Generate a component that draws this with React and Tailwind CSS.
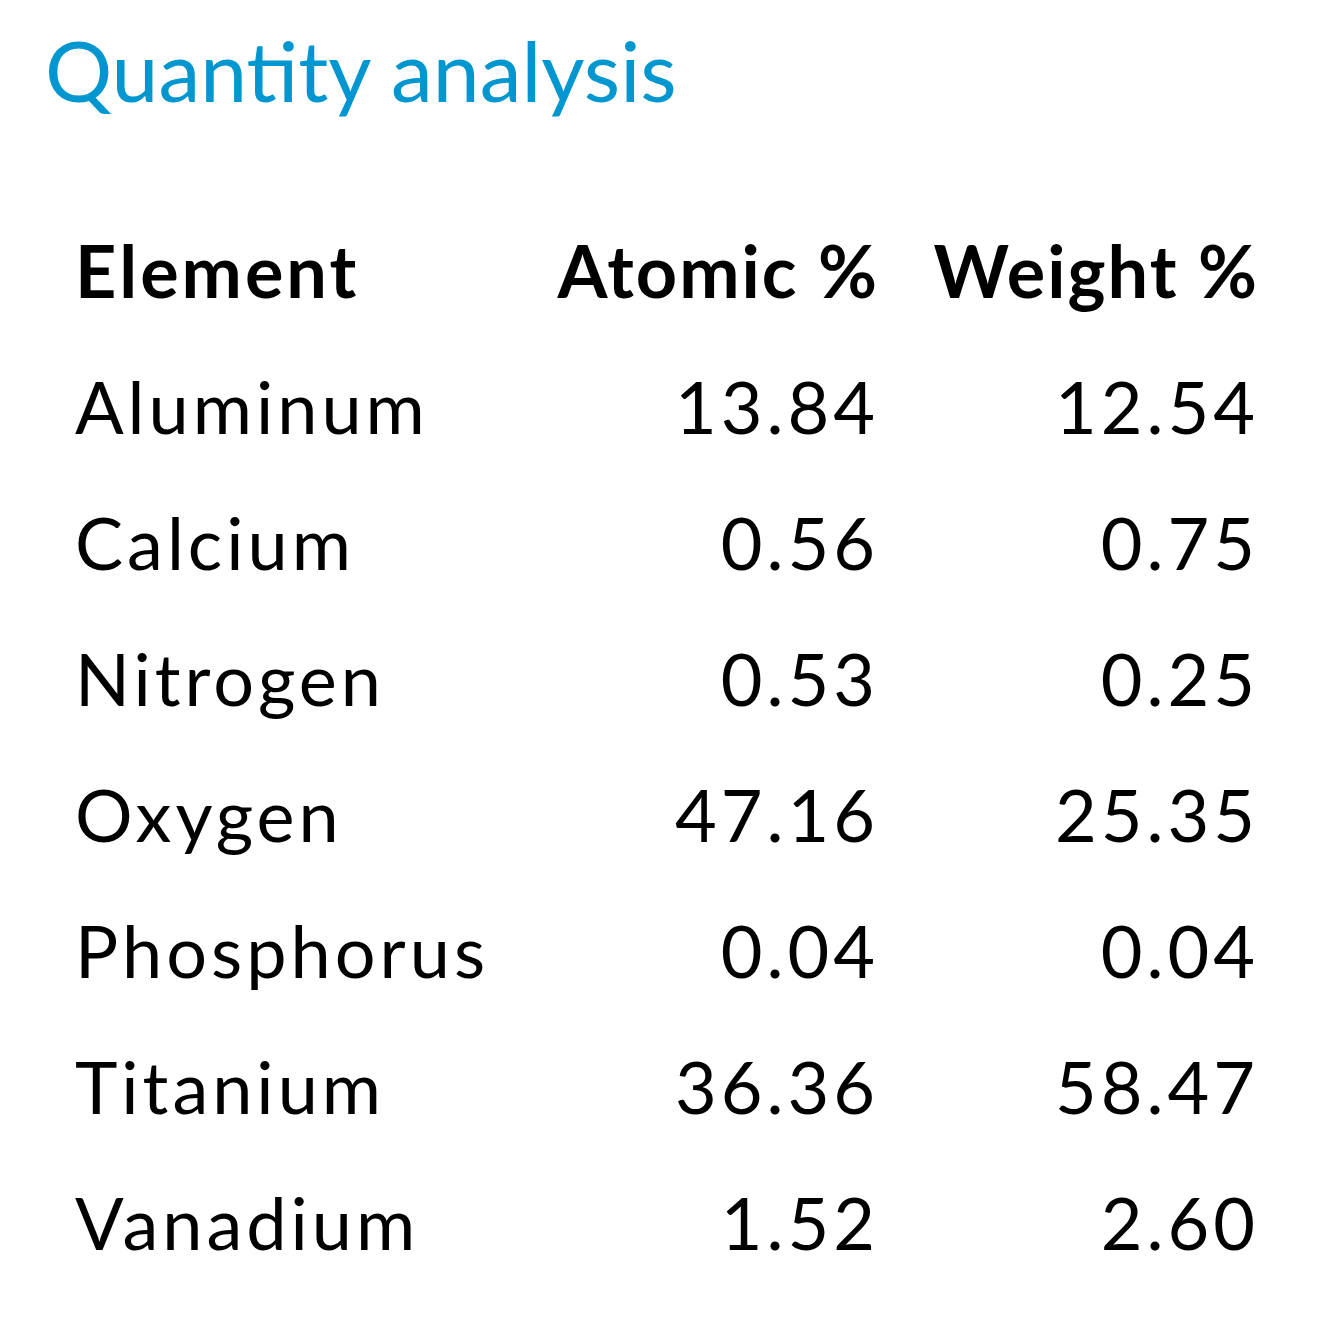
const rows = [
  ['Aluminum', '13.84', '12.54'],
  ['Calcium', '0.56', '0.75'],
  ['Nitrogen', '0.53', '0.25'],
  ['Oxygen', '47.16', '25.35'],
  ['Phosphorus', '0.04', '0.04'],
  ['Titanium', '36.36', '58.47'],
  ['Vanadium', '1.52', '2.60'],
];

export default function App() {
  return (
    <div className="w-[1320px] h-[1332px] bg-white font-['Lato',sans-serif] text-black">
      <h1 className="pl-[45px] pt-[20px] text-[84px] leading-[100px] text-[#0096d0] tracking-[0px]">
        Quantity analysis
      </h1>
      <div className="pl-[75px] pt-[82px] grid grid-cols-[470px_334px_380px] text-[72px] leading-[136px] tracking-[4px]">
        <div className="font-bold tracking-[3px]">Element</div>
        <div className="font-bold text-right tracking-[2px]">Atomic %</div>
        <div className="font-bold text-right tracking-[2px]">Weight %</div>
        {rows.map((r) => (
          <div key={r[0]} className="contents">
            <div>{r[0]}</div>
            <div className="text-right">{r[1]}</div>
            <div className="text-right">{r[2]}</div>
          </div>
        ))}
      </div>
    </div>
  );
}
